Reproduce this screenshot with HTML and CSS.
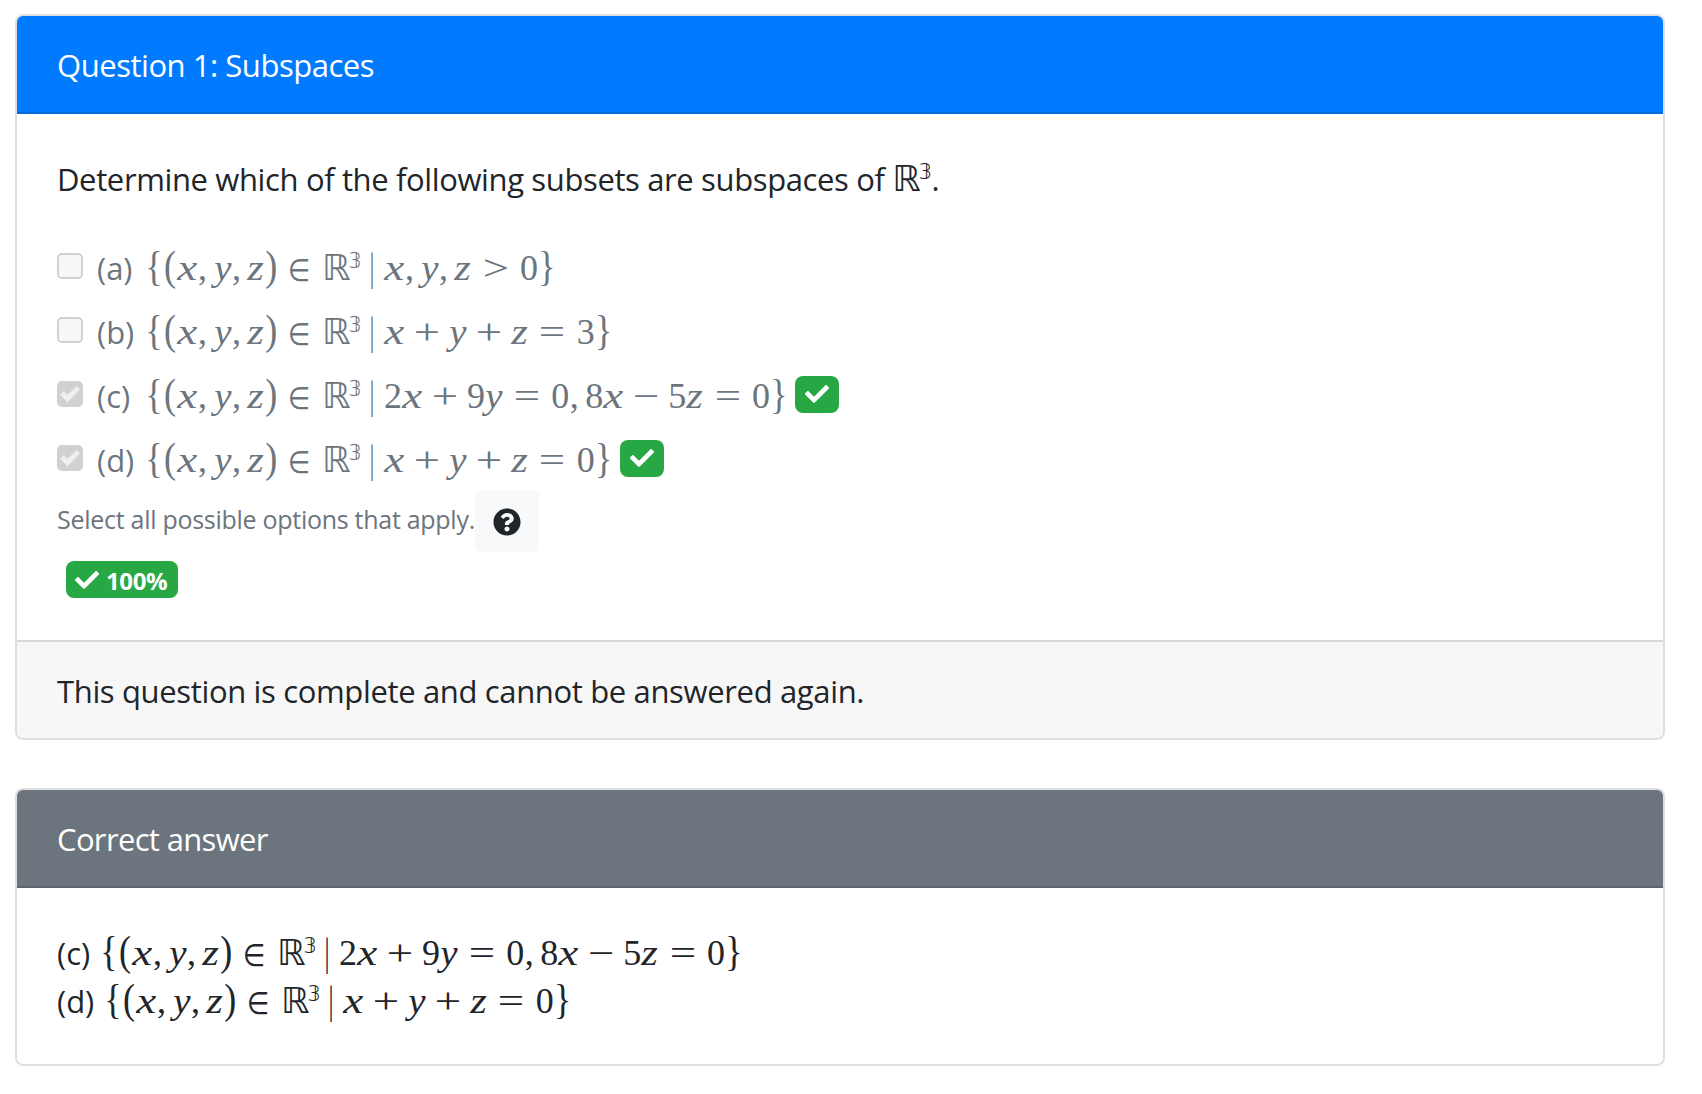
FILE: index.html
```html
<!DOCTYPE html>
<html lang="en">
<head>
<meta charset="utf-8">
<title>Question 1: Subspaces</title>
<link rel="stylesheet" href="styles.css">
</head>
<body>
<svg class="defs" aria-hidden="true">
  <symbol id="check" viewBox="0 0 512 512"><path d="M173.898 439.404l-166.4-166.4c-9.997-9.997-9.997-26.206 0-36.204l36.203-36.204c9.997-9.998 26.207-9.998 36.204 0L192 312.69 432.095 72.596c9.997-9.997 26.207-9.997 36.204 0l36.203 36.204c9.997 9.997 9.997 26.206 0 36.204l-294.4 294.401c-9.998 9.997-26.207 9.997-36.204-.001z"/></symbol>
  <symbol id="help" viewBox="0 0 512 512"><path d="M504 256c0 136.997-111.043 248-248 248S8 392.997 8 256C8 119.083 119.043 8 256 8s248 111.083 248 248zM262.655 90c-54.497 0-89.255 22.957-116.549 63.758-3.536 5.286-2.353 12.415 2.715 16.258l34.699 26.31c5.205 3.947 12.621 3.008 16.665-2.122 17.864-22.658 30.113-35.797 57.303-35.797 20.429 0 45.698 13.148 45.698 32.958 0 14.976-12.363 22.667-32.534 33.976C247.128 238.528 216 254.941 216 296v4c0 6.627 5.373 12 12 12h56c6.627 0 12-5.373 12-12v-1.333c0-28.462 83.186-29.647 83.186-106.667 0-58.002-60.165-102-116.531-102zM256 338c-25.365 0-46 20.635-46 46 0 25.364 20.635 46 46 46s46-20.636 46-46c0-25.365-20.635-46-46-46z"/></symbol>
</svg>

<section class="card">
  <header class="card-header primary"><span class="heading-q">Question 1: Subspaces</span></header>
  <div class="card-body">
    <p class="prompt"><span class="prompt-text">Determine which of the following subsets are subspaces of</span> <span class="math"><b class="bb">ℝ</b><b class="sup">𝟛</b></span>.</p>

    <div class="options">
      <label class="option"><span class="box"></span><span class="key">(a)</span><span class="math"><b class="lb">{</b><b class="lp">(</b><b class="x">x</b><b class="c">,</b><b class="y">y</b><b class="c">,</b><b class="z zp">z</b><b class="rp">)</b><b class="in">∈</b><b class="bb">ℝ</b><b class="sup">𝟛</b><b class="bar">|</b><b class="x">x</b><b class="c">,</b><b class="y">y</b><b class="c">,</b><b class="z">z</b><b class="rel gt">&gt;</b><b class="n">0</b><b class="rb">}</b></span></label>
      <label class="option"><span class="box"></span><span class="key">(b)</span><span class="math"><b class="lb">{</b><b class="lp">(</b><b class="x">x</b><b class="c">,</b><b class="y">y</b><b class="c">,</b><b class="z zp">z</b><b class="rp">)</b><b class="in">∈</b><b class="bb">ℝ</b><b class="sup">𝟛</b><b class="bar">|</b><b class="x">x</b><b class="op">+</b><b class="y">y</b><b class="op">+</b><b class="z">z</b><b class="rel">=</b><b class="n">3</b><b class="rb">}</b></span></label>
      <label class="option"><span class="box checked"><svg viewBox="0 0 8 8"><path d="M6.564.75l-3.59 3.612-1.538-1.55L0 4.26l2.974 2.99L8 2.193z"/></svg></span><span class="key">(c)</span><span class="math"><b class="lb">{</b><b class="lp">(</b><b class="x">x</b><b class="c">,</b><b class="y">y</b><b class="c">,</b><b class="z zp">z</b><b class="rp">)</b><b class="in">∈</b><b class="bb">ℝ</b><b class="sup">𝟛</b><b class="bar">|</b><b class="n">2</b><b class="x">x</b><b class="op">+</b><b class="n">9</b><b class="y">y</b><b class="rel">=</b><b class="n">0</b><b class="c">,</b><b class="n">8</b><b class="x">x</b><b class="op">−</b><b class="n">5</b><b class="z">z</b><b class="rel">=</b><b class="n">0</b><b class="rb">}</b></span><span class="badge"><svg><use href="#check"/></svg></span></label>
      <label class="option"><span class="box checked"><svg viewBox="0 0 8 8"><path d="M6.564.75l-3.59 3.612-1.538-1.55L0 4.26l2.974 2.99L8 2.193z"/></svg></span><span class="key">(d)</span><span class="math"><b class="lb">{</b><b class="lp">(</b><b class="x">x</b><b class="c">,</b><b class="y">y</b><b class="c">,</b><b class="z zp">z</b><b class="rp">)</b><b class="in">∈</b><b class="bb">ℝ</b><b class="sup">𝟛</b><b class="bar">|</b><b class="x">x</b><b class="op">+</b><b class="y">y</b><b class="op">+</b><b class="z">z</b><b class="rel">=</b><b class="n">0</b><b class="rb">}</b></span><span class="badge"><svg><use href="#check"/></svg></span></label>
    </div>

    <div class="hint"><span class="hint-text">Select all possible options that apply.</span><button class="help" type="button" aria-label="Help"><svg><use href="#help"/></svg></button></div>
    <div class="score"><span class="badge result"><svg><use href="#check"/></svg><span class="pct">100%</span></span></div>
  </div>
  <footer class="card-footer"><span class="foot-text">This question is complete and cannot be answered again.</span></footer>
</section>

<section class="card">
  <header class="card-header secondary"><span class="heading-a">Correct answer</span></header>
  <div class="card-body">
    <div class="answer"><span class="akey akey-c">(c)</span><span class="math"><b class="lb">{</b><b class="lp">(</b><b class="x">x</b><b class="c">,</b><b class="y">y</b><b class="c">,</b><b class="z zp">z</b><b class="rp">)</b><b class="in">∈</b><b class="bb">ℝ</b><b class="sup">𝟛</b><b class="bar">|</b><b class="n">2</b><b class="x">x</b><b class="op">+</b><b class="n">9</b><b class="y">y</b><b class="rel">=</b><b class="n">0</b><b class="c">,</b><b class="n">8</b><b class="x">x</b><b class="op">−</b><b class="n">5</b><b class="z">z</b><b class="rel">=</b><b class="n">0</b><b class="rb">}</b></span></div>
    <div class="answer"><span class="akey akey-d">(d)</span><span class="math"><b class="lb">{</b><b class="lp">(</b><b class="x">x</b><b class="c">,</b><b class="y">y</b><b class="c">,</b><b class="z zp">z</b><b class="rp">)</b><b class="in">∈</b><b class="bb">ℝ</b><b class="sup">𝟛</b><b class="bar">|</b><b class="x">x</b><b class="op">+</b><b class="y">y</b><b class="op">+</b><b class="z">z</b><b class="rel">=</b><b class="n">0</b><b class="rb">}</b></span></div>
  </div>
</section>
</body>
</html>
```
FILE: styles.css
```css
* { box-sizing: border-box; }

body {
  margin: 0;
  padding: 14px 37px 0 15px;
  background: #fff;
  color: #212529;
  font: 31px/48px "Open Sans", "Noto Sans", sans-serif;
}

.defs { display: none; }

.card {
  border: 2px solid #dfdfdf;
  border-radius: 8px;
  background: #fff;
  margin-bottom: 48px;
  overflow: hidden;
}

.card-header {
  height: 98px;
  padding: 25px 40px 0;
  border-bottom: 2px solid rgba(0, 0, 0, .125);
  color: #fff;
  white-space: nowrap;
}
.primary { background: #007bff; }
.secondary { background: #6c757d; }
.heading-q { letter-spacing: -.46px; }
.heading-a { letter-spacing: -.65px; }

.card-body { padding: 40px; }

.card-footer {
  height: 98px;
  padding: 25px 40px 0;
  border-top: 2px solid #d8d8d8;
  background: #f7f7f7;
  white-space: nowrap;
}
.foot-text { letter-spacing: -.35px; }

.prompt {
  height: 48px;
  margin: 0 0 32px;
  padding-top: 1px;
  white-space: nowrap;
}
.prompt-text { letter-spacing: -.37px; }

.options { color: #6c757d; }

.option {
  display: flex;
  align-items: center;
  height: 64px;
}

.box {
  width: 26px;
  height: 26px;
  margin-right: 14px;
  border: 2px solid #d1d1d1;
  border-radius: 5px;
  background: #f8f8f8;
}
.box.checked { background: #d1d1d1; padding: 1px; }
.box svg { display: block; width: 20px; height: 20px; fill: #efefef; }

.key { width: 48px; padding-top: 3px; }
.option .math { padding-top: 9px; }

.math {
  display: inline-flex;
  align-items: baseline;
  font: 36px/36px "Liberation Serif", "DejaVu Serif", "DejaVu Sans", serif;
}
.math b {
  display: inline-block;
  flex: none;
  font-weight: 400;
  text-align: center;
  transform-origin: 50% 83.75%;
}
.math .lb, .math .rb { width: 18px; transform: scale(1, 1.16); }
.math .lp, .math .rp { width: 14px; transform: scale(1, 1.16); }
.math .x { width: 20.6px; font-style: italic; transform: scaleX(1.25); }
.math .y { width: 17.8px; font-style: italic; transform: scaleX(1.08); }
.math .z { width: 17px; font-style: italic; transform: scaleX(1.18); }
.math .zp { width: 16.8px; }
.math .c { width: 10px; margin-right: 6px; }
.math .n { width: 18px; }
.math .in { width: 24px; margin: 0 10px; font-family: "DejaVu Sans", sans-serif; font-size: 27px; transform: translate(-1px, 1px) scale(.95, 1.15); }
.math .bb { width: 26px; font-family: "DejaVu Sans", sans-serif; }
.math .sup { width: 13px; margin-right: 6px; font-family: "DejaVu Sans", sans-serif; font-size: 21px; position: relative; top: -12px; }
.math .sup:last-child { margin-right: 0; }
.math .bar { width: 10px; margin-right: 6.8px; transform: scale(.7, 1.1); }
.math .op { width: 28px; margin: 0 8.2px; transform: scaleX(1.3); }
.math .rel { width: 28px; margin: 0 10.3px; transform: scaleX(1.3); }

.badge {
  display: inline-flex;
  align-items: center;
  height: 37px;
  margin-left: 7px;
  padding: 0 10px;
  border-radius: 8px;
  background: #28a745;
  color: #fff;
  font-size: 24px;
  font-weight: 700;
  line-height: 37px;
}
.badge svg { width: 24px; height: 24px; fill: currentColor; }
.badge.result { padding-left: 9px; padding-right: 11px; }
.pct { margin-left: 7px; padding-top: 1px; font-size: 24px; letter-spacing: -.4px; }

.hint {
  display: flex;
  height: 62px;
  color: #6c757d;
  font-size: 25px;
}
.hint-text { width: 418px; padding-top: 5px; white-space: nowrap; letter-spacing: -.28px; }
.help {
  display: grid;
  place-items: center;
  width: 64px;
  height: 62px;
  padding: 2px 0 0;
  border: 0;
  border-radius: 6px;
  background: #f8f9fa;
  color: #212529;
}
.help svg { width: 28px; height: 28px; fill: currentColor; }

.score { display: flex; height: 48px; margin-top: 9px; padding-left: 2px; margin-bottom: -9px; }

.answer { display: flex; align-items: baseline; height: 48px; padding-top: 1px; }
.akey-c { width: 43px; }
.akey-d { width: 47px; }
```
